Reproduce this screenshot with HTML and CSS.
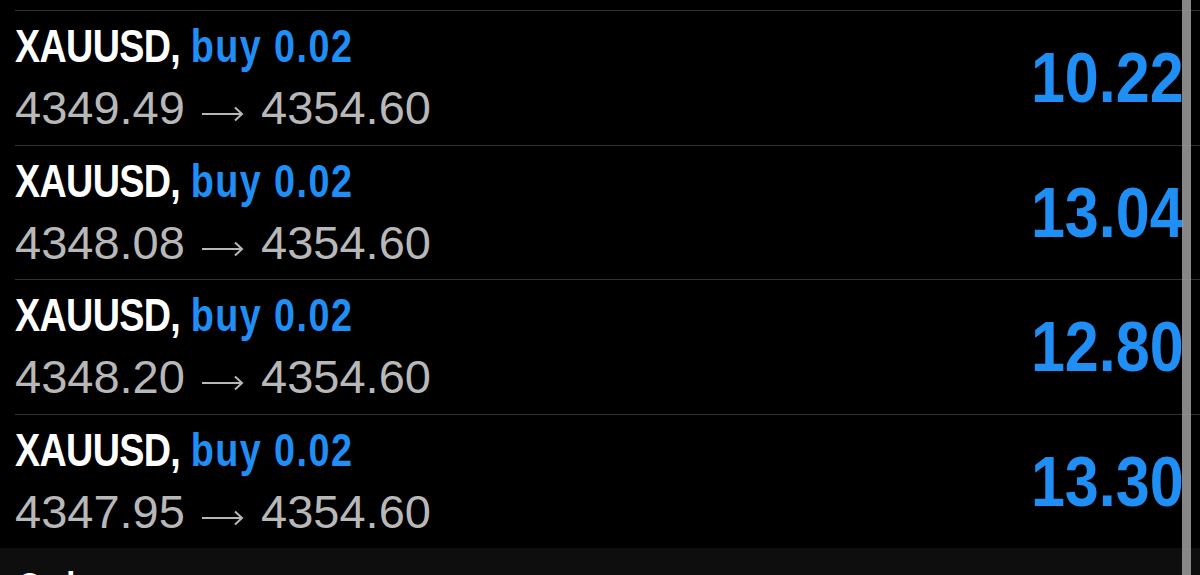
FILE: index.html
```html
<!DOCTYPE html>
<html lang="en">
<head>
    <meta charset="UTF-8">
    <meta name="viewport" content="width=device-width, initial-scale=1.0">
    <title>Positions</title>
    <link rel="stylesheet" href="styles.css">
</head>
<body>

    <div class="screen">
        <div class="positions">
            <div class="position">
                <div class="info">
                    <div class="title"><span class="narrow"><span class="symbol">XAUUSD,</span> <span class="side">buy 0.02</span></span></div>
                    <div class="prices">4349.49 <svg class="arrow" width="43" height="16" viewBox="0 0 43 16"><path d="M1 8H41M34 1.5L41 8L34 14.5" fill="none" stroke="#b8b8b8" stroke-width="2"/></svg> 4354.60</div>
                </div>
                <div class="profit"><span class="narrow">10.22</span></div>
            </div>
            <div class="position">
                <div class="info">
                    <div class="title"><span class="narrow"><span class="symbol">XAUUSD,</span> <span class="side">buy 0.02</span></span></div>
                    <div class="prices">4348.08 <svg class="arrow" width="43" height="16" viewBox="0 0 43 16"><path d="M1 8H41M34 1.5L41 8L34 14.5" fill="none" stroke="#b8b8b8" stroke-width="2"/></svg> 4354.60</div>
                </div>
                <div class="profit"><span class="narrow">13.04</span></div>
            </div>
            <div class="position">
                <div class="info">
                    <div class="title"><span class="narrow"><span class="symbol">XAUUSD,</span> <span class="side">buy 0.02</span></span></div>
                    <div class="prices">4348.20 <svg class="arrow" width="43" height="16" viewBox="0 0 43 16"><path d="M1 8H41M34 1.5L41 8L34 14.5" fill="none" stroke="#b8b8b8" stroke-width="2"/></svg> 4354.60</div>
                </div>
                <div class="profit"><span class="narrow">12.80</span></div>
            </div>
            <div class="position">
                <div class="info">
                    <div class="title"><span class="narrow"><span class="symbol">XAUUSD,</span> <span class="side">buy 0.02</span></span></div>
                    <div class="prices">4347.95 <svg class="arrow" width="43" height="16" viewBox="0 0 43 16"><path d="M1 8H41M34 1.5L41 8L34 14.5" fill="none" stroke="#b8b8b8" stroke-width="2"/></svg> 4354.60</div>
                </div>
                <div class="profit"><span class="narrow">13.30</span></div>
            </div>
        </div>

        <div class="section">
            <h2><span class="narrow">Orders</span></h2>
        </div>

        <div class="scrollbar"></div>
    </div>

</body>
</html>
```

FILE: styles.css
```css
body {
    margin: 0;
    background-color: #000;
    font-family: "Liberation Sans", Arial, sans-serif;
    overflow: hidden;
}

.screen {
    position: relative;
    height: 575px;
    padding-top: 10px;
    box-sizing: border-box;
    overflow: hidden;
}

.positions {
    padding-left: 15px;
}

.position {
    display: flex;
    align-items: center;
    justify-content: space-between;
    height: 134.5px;
    box-sizing: border-box;
    border-top: 1px solid #333;
}

.info {
    align-self: flex-start;
    padding-top: 12px;
    display: flex;
    flex-direction: column;
}

/* the app uses a condensed face, squeeze the regular one */
.narrow {
    display: inline-block;
    white-space: nowrap;
    transform: scaleX(0.82);
    transform-origin: left center;
}

.title {
    font-weight: bold;
    font-size: 46px;
    line-height: 46px;
    color: #fff;
}

.symbol {
    letter-spacing: -0.8px;
}

.side {
    color: #1f8ef5;
    letter-spacing: 1.8px;
}

.prices {
    margin-top: 15px;
    font-size: 47px;
    line-height: 47px;
    color: #b8b8b8;
    white-space: nowrap;
}

.arrow {
    vertical-align: 2px;
    margin: 0 4px 0 3px;
}

.profit {
    font-weight: bold;
    font-size: 71px;
    color: #1f8ef5;
    padding-right: 16px;
}

.profit .narrow {
    transform: scaleX(0.86);
    transform-origin: right center;
}

.section {
    background-color: #0e0e0e;
    height: 60px;
    padding-left: 17px;
}

.section h2 {
    margin: 0;
    padding-top: 16px;
    font-size: 40px;
    line-height: 46px;
    color: #fff;
}

.scrollbar {
    position: absolute;
    top: 0;
    bottom: 0;
    left: 1182px;
    width: 9px;
    background-color: rgba(150, 150, 150, 0.9);
}
```
